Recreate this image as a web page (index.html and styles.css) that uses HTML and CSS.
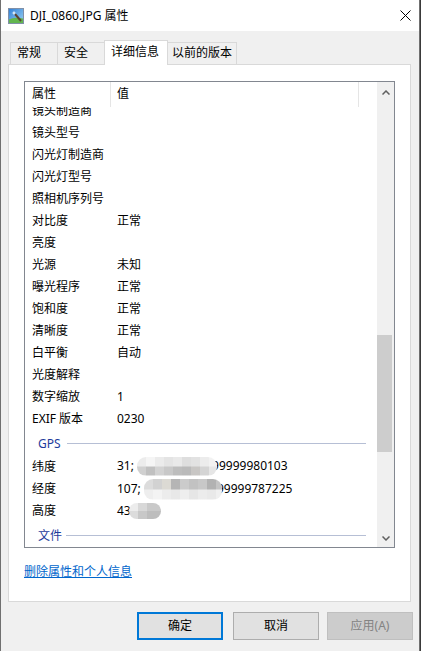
FILE: index.html
```html
<!DOCTYPE html>
<html lang="zh-CN">
<head>
    <meta charset="UTF-8">
    <meta name="viewport" content="width=device-width, initial-scale=1.0">
    <title>DJI_0860.JPG 属性</title>
    <link rel="stylesheet" href="styles.css">
</head>
<body>
    <div class="window">
        <!-- title bar -->
        <div class="titlebar">
            <svg class="title-icon" width="16" height="16" viewBox="0 0 16 16">
                <defs>
                    <linearGradient id="sky" x1="0" y1="0" x2="1" y2="1">
                        <stop offset="0" stop-color="#2f7ed6"/>
                        <stop offset="1" stop-color="#9dd3f3"/>
                    </linearGradient>
                </defs>
                <rect x="0.5" y="0.5" width="15" height="15" fill="url(#sky)" stroke="#8090a8"/>
                <path d="M1 11.5 Q6 8.5 15 10.5 V15 H1 Z" fill="#62b64f"/>
                <line x1="7" y1="6" x2="13" y2="13" stroke="#5b4331" stroke-width="2"/>
                <path d="M6 2.5 L6.6 4.4 L8.5 5 L6.6 5.6 L6 7.5 L5.4 5.6 L3.5 5 L5.4 4.4 Z" fill="#fff"/>
            </svg>
            <div class="title">DJI_0860.JPG 属性</div>
            <svg class="close" width="11" height="11" viewBox="0 0 11 11">
                <path d="M0.5 0.5 L10.5 10.5 M10.5 0.5 L0.5 10.5" stroke="#000" stroke-width="1"/>
            </svg>
        </div>

        <!-- tabs -->
        <div class="tabs">
            <div class="tab tab-general">常规</div>
            <div class="tab tab-security">安全</div>
            <div class="tab tab-details active">详细信息</div>
            <div class="tab tab-prev">以前的版本</div>
        </div>

        <div class="panel">
            <div class="listbox">
                <div class="list-main">
                    <div class="list-head">
                        <div class="col-name">属性</div>
                        <div class="col-value">值</div>
                    </div>
                    <div class="list-body">
                        <div class="rows">
                            <div class="row"><span class="name">镜头制造商</span><span class="val"></span></div>
                            <div class="row"><span class="name">镜头型号</span><span class="val"></span></div>
                            <div class="row"><span class="name">闪光灯制造商</span><span class="val"></span></div>
                            <div class="row"><span class="name">闪光灯型号</span><span class="val"></span></div>
                            <div class="row"><span class="name">照相机序列号</span><span class="val"></span></div>
                            <div class="row"><span class="name">对比度</span><span class="val">正常</span></div>
                            <div class="row"><span class="name">亮度</span><span class="val"></span></div>
                            <div class="row"><span class="name">光源</span><span class="val">未知</span></div>
                            <div class="row"><span class="name">曝光程序</span><span class="val">正常</span></div>
                            <div class="row"><span class="name">饱和度</span><span class="val">正常</span></div>
                            <div class="row"><span class="name">清晰度</span><span class="val">正常</span></div>
                            <div class="row"><span class="name">白平衡</span><span class="val">自动</span></div>
                            <div class="row"><span class="name">光度解释</span><span class="val"></span></div>
                            <div class="row"><span class="name">数字缩放</span><span class="val">1</span></div>
                            <div class="row"><span class="name">EXIF 版本</span><span class="val">0230</span></div>
                            <div class="group">GPS</div>
                            <div class="row"><span class="name">纬度</span><span class="val">31; <span class="blur blur-lat"></span>99999980103</span></div>
                            <div class="row"><span class="name">经度</span><span class="val">107; <span class="blur blur-lon"></span>99999787225</span></div>
                            <div class="row"><span class="name">高度</span><span class="val">43<span class="blur blur-alt"></span></span></div>
                            <div class="group group-file">文件</div>
                        </div>
                    </div>
                </div>
                <!-- scrollbar -->
                <div class="scrollbar">
                    <div class="sb-btn sb-up">
                        <svg width="8" height="5" viewBox="0 0 8 5"><polyline points="0.5,4.5 4,1 7.5,4.5" fill="none" stroke="#606060" stroke-width="1.5"/></svg>
                    </div>
                    <div class="sb-track"><div class="sb-thumb"></div></div>
                    <div class="sb-btn sb-down">
                        <svg width="8" height="5" viewBox="0 0 8 5"><polyline points="0.5,0.5 4,4 7.5,0.5" fill="none" stroke="#606060" stroke-width="1.5"/></svg>
                    </div>
                </div>
            </div>
            <a class="link" href="#">删除属性和个人信息</a>
        </div>

        <div class="buttons">
            <button class="btn default">确定</button>
            <button class="btn">取消</button>
            <button class="btn" disabled>应用(A)</button>
        </div>
    </div>
</body>
</html>
```

FILE: styles.css
```css
*{
    box-sizing: border-box;
}
body{
    margin: 0;
    background-color: #3a3a3a;
    font-family: "Noto Sans", "Noto Sans CJK SC", sans-serif;
    font-size: 12px;
    color: #000;
}
.window{
    width: 420px;
    height: 651px;
    background-color: #f0f0f0;
    border-left: 1px solid #707070;
    border-right: 1px solid #707070;
    display: flex;
    flex-direction: column;
}
.titlebar{
    height: 31px;
    flex-shrink: 0;
    background-color: #fff;
    display: flex;
    align-items: center;
    padding: 0 8px 0 7px;
}
.title{
    flex: 1;
    margin-left: 6px;
    line-height: 16px;
}
/* tabs */
.tabs{
    height: 33px;
    flex-shrink: 0;
    display: flex;
    align-items: flex-end;
    padding-left: 9px;
}
.tab{
    height: 22px;
    border: 1px solid #d9d9d9;
    border-bottom: none;
    margin-right: -1px;
    padding: 2px 0 0 6px;
    line-height: 16px;
    background-color: #f0f0f0;
}
.tab-general{
    width: 48px;
}
.tab-security{
    width: 48px;
}
.tab-details{
    width: 64px;
}
.tab-prev{
    width: 70px;
    padding-left: 4px;
}
.tab.active{
    height: 25px;
    background-color: #fff;
    margin-bottom: -1px;
    padding: 3px 0 0 6px;
    position: relative;
    z-index: 1;
}
.panel{
    width: 403px;
    height: 538px;
    flex-shrink: 0;
    margin-left: 7px;
    background-color: #fff;
    border: 1px solid #d9d9d9;
    padding: 16px 0 0 15px;
}
/* list view */
.listbox{
    width: 371px;
    height: 467px;
    border: 1px solid #828790;
    display: flex;
}
.list-main{
    flex: 1;
    min-width: 0;
    display: flex;
    flex-direction: column;
}
.list-head{
    height: 25px;
    flex-shrink: 0;
    display: flex;
    line-height: 24px;
}
.col-name{
    width: 86px;
    padding-left: 7px;
    border-right: 1px solid #e5e5e5;
}
.col-value{
    width: 248px;
    padding-left: 6px;
    border-right: 1px solid #e5e5e5;
}
.list-body{
    flex: 1;
    overflow: hidden;
}
.rows{
    margin-top: -7px;
}
.row{
    height: 22px;
    display: flex;
    align-items: center;
    line-height: 16px;
    white-space: nowrap;
}
.row .name{
    width: 86px;
    padding-left: 7px;
}
.row .val{
    padding-left: 6px;
}
.group{
    height: 26px;
    display: flex;
    align-items: center;
    padding: 2px 11px 0 13px;
    line-height: 16px;
    color: #1e3c9c;
}
.group::after{
    content: "";
    flex: 1;
    height: 1px;
    margin: -2px 0 0 6px;
    background-color: #b6bfd5;
}
.group-file::after{
    margin-left: 4px;
}
/* blurred parts of the coordinates */
.blur{
    display: inline-block;
    position: relative;
    vertical-align: middle;
    border-radius: 9px;
    background-repeat: no-repeat;
    background-position: top left, bottom left;
    background-size: 100% 50%, 100% 50%;
}
.blur-lat{
    width: 80px;
    height: 19px;
    margin: -2px -5px 0 0;
    background-image:
        linear-gradient(to right, #ececec 0 9px, #f5f5f5 9px 18px, #ebebeb 18px 27px, #e4e4e4 27px 36px, #e9e9e9 36px 45px, #dedede 45px 54px, #e2e2e2 54px 63px, #ececec 63px 72px, #f2f2f2 72px),
        linear-gradient(to right, #d0d0d0 0 9px, #c0c0c0 9px 18px, #d2d2d2 18px 27px, #c8c8c8 27px 36px, #bdbdbd 36px 45px, #bababa 45px 54px, #c8c6c4 54px 63px, #d4d4d4 63px 72px, #e6e6e6 72px);
}
.blur-lon{
    width: 78px;
    height: 21px;
    margin: 0 -5px 0 0;
    background-image:
        linear-gradient(to right, #dcdcdc 0 9px, #d2d2d2 9px 18px, #dcdad4 18px 27px, #b5b5b5 27px 36px, #cbcbcb 36px 45px, #c2c2c2 45px 54px, #c8c8c8 54px 63px, #b2b2b2 63px 72px, #c4c4c4 72px),
        linear-gradient(to right, #eeeeee 0 9px, #f3f3f3 9px 18px, #ececec 18px 27px, #e8e8e8 27px 36px, #eeeeee 36px 45px, #e6e6e6 45px 54px, #ececec 54px 63px, #e9e9e9 63px 72px, #f0f0f0 72px);
}
.blur-alt{
    width: 32px;
    height: 16px;
    margin-left: -2px;
    background-image:
        linear-gradient(to right, #ececec 0 9px, #d8d8d8 9px 18px, #c9c9c9 18px),
        linear-gradient(to right, #dcdcdc 0 9px, #c8c8c8 9px 18px, #bdbdbd 18px);
}
/* scrollbar */
.scrollbar{
    width: 17px;
    flex-shrink: 0;
    background-color: #f0f0f0;
    display: flex;
    flex-direction: column;
}
.sb-btn{
    height: 17px;
    flex-shrink: 0;
    display: flex;
    align-items: center;
    justify-content: center;
}
.sb-btn svg{
    display: block;
}
.sb-up{
    padding-top: 3px;
}
.sb-track{
    flex: 1;
}
.sb-thumb{
    width: 15px;
    height: 117px;
    margin-top: 236px;
    background-color: #cdcdcd;
}
.link{
    display: inline-block;
    margin-top: 16px;
    line-height: 16px;
    color: #0066cc;
    text-decoration: underline;
}
/* dialog buttons */
.buttons{
    display: flex;
    justify-content: flex-end;
    gap: 8px;
    padding: 10px 6px 0 0;
}
.btn{
    width: 86px;
    height: 28px;
    border: 1px solid #adadad;
    background-color: #e1e1e1;
    font-family: inherit;
    font-size: 12px;
    color: #000;
    padding: 0;
    line-height: 16px;
}
.btn.default{
    border: 2px solid #0078d7;
    margin-right: 2px;
}
.btn:disabled{
    background-color: #cccccc;
    border-color: #bfbfbf;
    color: #838383;
}
```
